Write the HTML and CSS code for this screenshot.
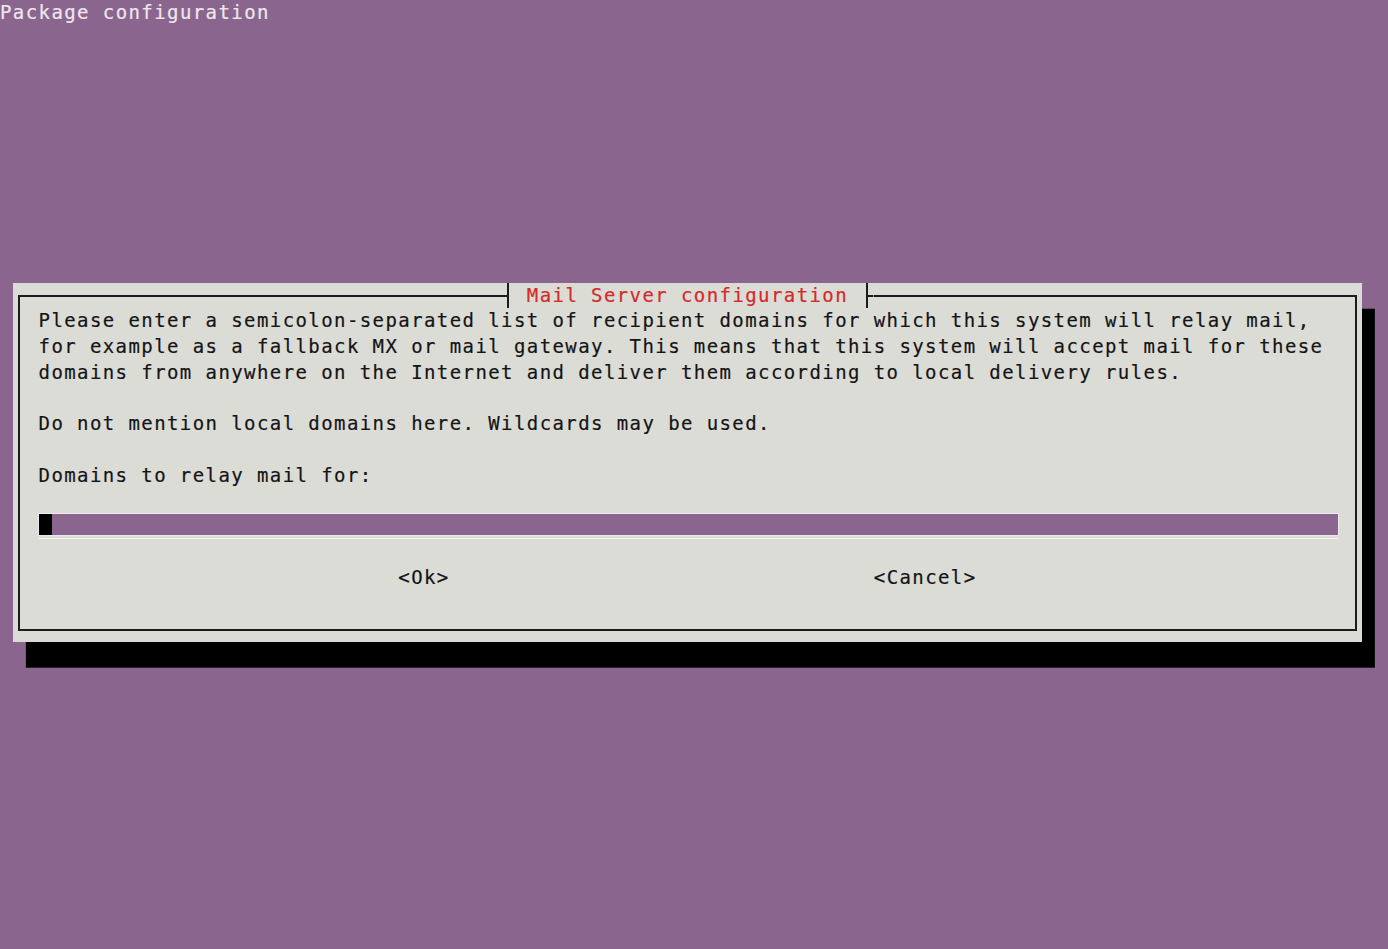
FILE: index.html
```html
<!DOCTYPE html>
<html lang="en">
<head>
<meta charset="utf-8">
<title>Package configuration</title>
<link rel="stylesheet" href="styles.css">
</head>
<body>
<div class="term">
  <div class="header">Package configuration</div>
  <div class="dialog">
    <div class="title"><span class="tee tee-l"></span><span class="title-text"> Mail Server configuration </span><span class="tee tee-r"></span></div>
    <div class="frame">
      <div class="para">Please enter a semicolon-separated list of recipient domains for which this system will relay mail,<br>for example as a fallback MX or mail gateway. This means that this system will accept mail for these<br>domains from anywhere on the Internet and deliver them according to local delivery rules.</div>
      <div class="para">Do not mention local domains here. Wildcards may be used.</div>
      <div class="para">Domains to relay mail for:</div>
      <div class="field">
        <div class="bar"><span class="cursor"></span></div>
        <div class="underline"></div>
      </div>
      <div class="buttons"><span class="btn">&lt;Ok&gt;</span><span class="btn btn-cancel">&lt;Cancel&gt;</span></div>
    </div>
  </div>
</div>
</body>
</html>
```
FILE: styles.css
```css
:root {
  --cw: 12.85px;
  --lh: 25.7px;
  --purple: #8a668e;
  --dlg: #dcdcd7;
  --ink: #141414;
  --line: #1c1c1c;
}

html, body {
  margin: 0;
  padding: 0;
  background: var(--purple);
}

body {
  width: 1388px;
  height: 949px;
  overflow: hidden;
  font-family: "DejaVu Sans Mono", "Liberation Mono", monospace;
  font-size: 19px;
  line-height: var(--lh);
  letter-spacing: 1.41px;
  -webkit-text-stroke: 0.2px currentColor;
}

.term {
  display: flex;
  flex-direction: column;
}

.header {
  height: var(--lh);
  color: #eee7ee;
  white-space: pre;
}

.dialog {
  position: relative;
  margin-top: calc(var(--lh) * 10);
  margin-left: var(--cw);
  width: calc(var(--cw) * 105);
  height: calc(var(--lh) * 14);
  box-sizing: border-box;
  padding: 11.85px 5.4px;
  background: var(--dlg);
  box-shadow: var(--cw) var(--lh) 0 0 #000;
}

.frame {
  height: 100%;
  box-sizing: border-box;
  border: 2px solid var(--line);
  padding: 11.85px 0 calc(var(--lh) + 11.85px) 18.3px;
  display: flex;
  flex-direction: column;
  gap: var(--lh);
  color: var(--ink);
}

.para {
  white-space: pre;
}

.title {
  position: absolute;
  top: 0;
  left: calc(var(--cw) * 38);
  height: var(--lh);
  display: flex;
}

.title-text {
  white-space: pre;
  color: #d42a27;
  background: var(--dlg);
}

.tee {
  display: block;
  width: var(--cw);
  height: var(--lh);
}

.tee-l {
  background:
    linear-gradient(var(--line), var(--line)) center / 2px 100% no-repeat,
    linear-gradient(var(--line), var(--line)) left center / 50% 2px no-repeat,
    var(--dlg);
}

.tee-r {
  background:
    linear-gradient(var(--line), var(--line)) center / 2px 100% no-repeat,
    linear-gradient(var(--line), var(--line)) right center / 50% 2px no-repeat,
    var(--dlg);
}

.field {
  height: var(--lh);
  width: calc(var(--cw) * 101 + 2px);
  display: flex;
  flex-direction: column;
}

.bar {
  height: 21px;
  background: var(--purple);
  box-shadow: 0 0 0 1px #ece8ee;
  display: flex;
}

.cursor {
  display: block;
  width: 13px;
  height: 21px;
  background: #000;
}

.underline {
  margin-top: 3px;
  height: 1px;
  background: #f6f6f6;
}

.buttons {
  display: flex;
  padding-left: calc(var(--cw) * 28);
  white-space: pre;
}

.btn-cancel {
  margin-left: calc(var(--cw) * 33);
}
```
